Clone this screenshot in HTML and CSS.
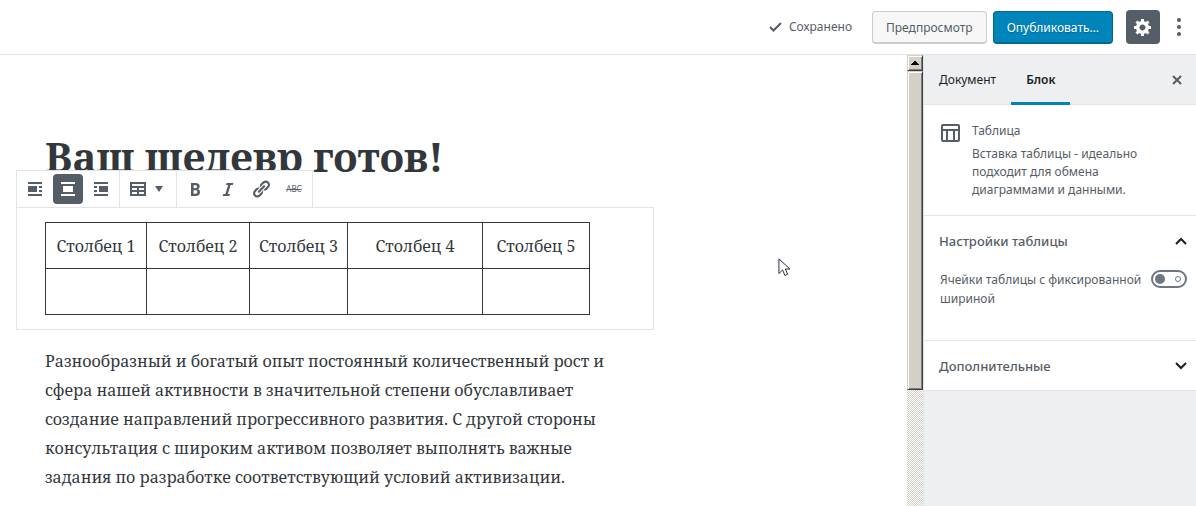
FILE: index.html
```html
<!DOCTYPE html>
<html lang="ru">
<head>
<meta charset="utf-8">
<meta name="viewport" content="width=device-width, initial-scale=1">
<title>Редактор записи</title>
<link rel="stylesheet" href="styles.css">
</head>
<body>
<div class="app">
  <header class="header">
    <span class="saved">
      <svg class="icon" width="20" height="20" viewBox="0 0 20 20" aria-hidden="true"><path d="M15.3 5.3l-6.8 6.8-2.8-2.8-1.4 1.4 4.2 4.2 8.2-8.2"/></svg>
      Сохранено
    </span>
    <button class="button" type="button">Предпросмотр</button>
    <button class="button button-primary" type="button">Опубликовать…</button>
    <button class="settings" type="button" aria-label="Настройки">
      <svg class="icon" width="20" height="20" viewBox="0 0 20 20"><path d="M18 12h-2.180c-.17.7-.44 1.350-.81 1.930l1.540 1.540-2.100 2.100-1.540-1.540c-.58.360-1.230.630-1.910.790V19H8v-2.180c-.68-.16-1.330-.43-1.910-.79l-1.540 1.540-2.120-2.120 1.540-1.540c-.36-.58-.63-1.230-.79-1.910H1V9.030h2.170c.16-.7.44-1.350.8-1.940L2.430 5.550l2.100-2.100 1.540 1.540c.58-.37 1.240-.64 1.930-.81V2h3v2.180c.68.160 1.330.430 1.910.790l1.540-1.540 2.120 2.120-1.540 1.540c.36.590.64 1.240.8 1.940H18V12zm-8.500 1.500c1.660 0 3-1.340 3-3s-1.340-3-3-3-3 1.340-3 3 1.340 3 3 3z"/></svg>
    </button>
    <button class="more" type="button" aria-label="Ещё">
      <svg class="icon" width="6" height="20" viewBox="0 0 6 20"><circle cx="3" cy="3" r="2"/><circle cx="3" cy="10" r="2"/><circle cx="3" cy="17" r="2"/></svg>
    </button>
  </header>

  <div class="workspace">
    <main class="editor">
      <h1 class="title">Ваш шедевр готов!</h1>
      <section class="block">
        <div class="toolbar" role="toolbar" aria-label="Инструменты блока">
          <div class="group">
            <button class="tool" type="button" aria-label="По левому краю"><svg class="icon" width="20" height="20" viewBox="0 0 20 20"><path d="M3 5h14V3H3v2zm9 8V7H3v6h9zm2-4h3V7h-3v2zm0 4h3v-2h-3v2zM3 17h14v-2H3v2z"/></svg></button>
            <button class="tool tool-active" type="button" aria-label="По центру"><svg class="icon" width="20" height="20" viewBox="0 0 20 20"><path d="M3 5h14V3H3v2zm12 8V7H5v6h10zM3 17h14v-2H3v2z"/></svg></button>
            <button class="tool" type="button" aria-label="По правому краю"><svg class="icon" width="20" height="20" viewBox="0 0 20 20"><path d="M3 5h14V3H3v2zm0 4h3V7H3v2zm14 4V7H8v6h9zM3 13h3v-2H3v2zm0 4h14v-2H3v2z"/></svg></button>
          </div>
          <div class="group">
            <button class="tool tool-wide" type="button" aria-label="Изменить таблицу"><svg class="icon" width="20" height="20" viewBox="0 0 20 20"><path d="M18 17V3H2v14h16zM16 7H4V5h12v2zm-7 4H4V9h5v2zm7 0h-5V9h5v2zm-7 4H4v-2h5v2zm7 0h-5v-2h5v2z"/></svg><svg class="icon" width="8" height="6" viewBox="0 0 8 6"><path d="M0 0h8L4 6z"/></svg></button>
          </div>
          <div class="group">
            <button class="tool" type="button" aria-label="Жирный"><svg class="icon" width="20" height="20" viewBox="0 0 20 20"><path d="M6 4v13h4.540c1.370 0 2.460-.33 3.260-1 .8-.66 1.200-1.580 1.200-2.770 0-.84-.17-1.510-.51-2.010s-.9-.85-1.670-1.030v-.09c.57-.1 1.020-.4 1.360-.9s.51-1.130.51-1.910c0-1.140-.39-1.980-1.170-2.500C12.750 4.260 11.500 4 9.780 4H6zm2.570 5.150V6.260h1.360c.73 0 1.270.11 1.610.32.34.22.51.58.51 1.070 0 .54-.16.92-.47 1.150s-.82.35-1.510.35h-1.500zm0 2.190h1.600c1.440 0 2.160.53 2.160 1.610 0 .6-.17 1.050-.51 1.340s-.86.43-1.570.43H8.570v-3.380z"/></svg></button>
            <button class="tool" type="button" aria-label="Курсив"><svg class="icon" width="20" height="20" viewBox="0 0 20 20"><path d="M14.780 6h-2.130l-2.800 9h2.120l-.62 2H4.600l.62-2h2.140l2.800-9H8.030l.62-2h6.750z"/></svg></button>
            <button class="tool" type="button" aria-label="Ссылка"><svg class="icon" width="20" height="20" viewBox="0 0 20 20"><path d="M17.740 2.760c1.680 1.690 1.680 4.410 0 6.100l-1.530 1.520c-1.120 1.120-2.700 1.470-4.140 1.090l2.620-2.610.76-.77.76-.76c.84-.84.84-2.200 0-3.040-.84-.85-2.200-.85-3.040 0l-.77.760-3.380 3.380c-.37-1.440-.02-3.020 1.100-4.140l1.520-1.530c1.690-1.680 4.420-1.680 6.100 0zM8.590 13.430l5.340-5.340c.42-.42.420-1.100 0-1.520-.44-.43-1.130-.39-1.530 0l-5.330 5.340c-.42.420-.42 1.100 0 1.520.44.430 1.130.39 1.520 0zm-.76 2.290l4.140-4.150c.38 1.440.03 3.020-1.090 4.140l-1.520 1.530c-1.690 1.680-4.410 1.680-6.100 0-1.680-1.680-1.680-4.420 0-6.100l1.530-1.520c1.120-1.120 2.700-1.470 4.140-1.100l-4.140 4.150c-.85.840-.85 2.200 0 3.050.84.840 2.200.84 3.040 0z"/></svg></button>
            <button class="tool" type="button" aria-label="Зачёркнутый"><span class="strike">ABC</span></button>
          </div>
        </div>
        <table class="table">
          <colgroup><col class="col-1"><col class="col-2"><col class="col-3"><col class="col-4"><col class="col-5"></colgroup>
          <tr><td>Столбец 1</td><td>Столбец 2</td><td>Столбец 3</td><td>Столбец 4</td><td>Столбец 5</td></tr>
          <tr><td></td><td></td><td></td><td></td><td></td></tr>
        </table>
      </section>
      <p class="paragraph">Разнообразный и богатый опыт постоянный количественный рост и<br>сфера нашей активности в значительной степени обуславливает<br>создание направлений прогрессивного развития. С другой стороны<br>консультация с широким активом позволяет выполнять важные<br>задания по разработке соответствующий условий активизации.</p>
      <svg class="cursor" width="13" height="20" viewBox="0 0 13 20" aria-hidden="true"><path d="M1 1v16l4-4 2.500 6 3-1.300L8 12h5z" transform="scale(.92)"/></svg>
    </main>

    <div class="scrollbar" aria-hidden="true">
      <div class="scroll-up"><svg width="8" height="4" viewBox="0 0 8 4"><path d="M3 0h2v1h1v1h1v1h1v1H0V3h1V2h1V1h1z"/></svg></div>
      <div class="thumb"></div>
    </div>

    <aside class="sidebar">
      <div class="tabs">
        <button class="tab" type="button">Документ</button>
        <button class="tab tab-active" type="button">Блок</button>
        <button class="close" type="button" aria-label="Закрыть"><svg class="icon" width="10" height="10" viewBox="0 0 10 10"><path class="line" d="M1 1l8 8M9 1L1 9"/></svg></button>
      </div>
      <div class="card">
        <svg class="icon" width="24" height="24" viewBox="0 0 24 24" aria-hidden="true"><path fill-rule="evenodd" d="M4 3h15a2 2 0 0 1 2 2v14a2 2 0 0 1-2 2H4a2 2 0 0 1-2-2V5a2 2 0 0 1 2-2zM4 5v3h15V5zM4 10v9h3v-9zM9 10v9h5v-9zM16 10v9h3v-9z"/></svg>
        <div class="card-text">
          <div class="card-title">Таблица</div>
          <div class="card-description">Вставка таблицы - идеально подходит для обмена диаграммами и данными.</div>
        </div>
      </div>
      <section class="panel panel-open">
        <button class="panel-head" type="button">Настройки таблицы<svg width="12" height="8" viewBox="0 0 12 8"><path class="chevron" d="M1 7l5-5 5 5"/></svg></button>
        <div class="setting">
          <label for="fixed">Ячейки таблицы с фиксированной шириной</label>
          <input class="toggle" id="fixed" type="checkbox">
        </div>
      </section>
      <section class="panel">
        <button class="panel-head" type="button">Дополнительные<svg width="12" height="8" viewBox="0 0 12 8"><path class="chevron" d="M1 1l5 5 5-5"/></svg></button>
      </section>
    </aside>
  </div>
</div>
</body>
</html>
```

FILE: styles.css
```css
*, ::before, ::after { box-sizing: border-box; }

body {
  margin: 0;
  background: #fff;
  color: #555d66;
  font: 12px/18px "Noto Sans", "Open Sans", sans-serif;
}

button {
  margin: 0;
  padding: 0;
  border: 0;
  background: none;
  color: inherit;
  font: inherit;
}

svg { display: block; flex: none; }
.icon { fill: #555d66; }

.app {
  display: flex;
  flex-direction: column;
  height: 100vh;
  overflow: hidden;
}

/* Top bar */
.header {
  display: flex;
  flex: none;
  align-items: center;
  justify-content: flex-end;
  height: 55px;
  padding-right: 14px;
  border-bottom: 1px solid #e2e4e7;
}

.saved {
  display: flex;
  align-items: center;
  gap: 4px;
  margin-right: 20px;
}

.button {
  height: 33px;
  margin-right: 6px;
  padding: 3px 13px 0;
  border: 1px solid #ccc;
  border-bottom-width: 2px;
  border-radius: 4px;
  background: #f7f7f7;
}

.button-primary {
  margin-right: 13px;
  border-color: #006799;
  background: #0085ba;
  color: #fff;
  text-shadow: 0 1px 1px #006799;
}

.settings {
  display: grid;
  place-items: center;
  width: 34px;
  height: 34px;
  margin-right: 16px;
  border-radius: 4px;
  background: #555d66;
}
.settings .icon { fill: #fff; }

/* Editor */
.workspace {
  display: flex;
  flex: 1;
  min-height: 0;
}

.editor {
  flex: 1;
  min-width: 0;
  overflow: hidden;
  padding: 75px 0 0 16px;
  color: #32373c;
  font-family: "Noto Serif", "DejaVu Serif", serif;
}

.title {
  margin: 0 0 23px 29px;
  font-size: 40px;
  line-height: 54px;
  white-space: nowrap;
}

.block {
  position: relative;
  max-width: 638px;
  padding: 14px 28px;
  border: 1px solid #e2e4e7;
}

.toolbar {
  position: absolute;
  left: -1px;
  bottom: 100%;
  display: flex;
  border: 1px solid #e2e4e7;
  background: #fff;
}

.group {
  display: flex;
  align-items: center;
  gap: 3px;
  padding: 3px;
}
.group + .group { border-left: 1px solid #e2e4e7; }

.tool {
  display: flex;
  align-items: center;
  justify-content: center;
  width: 30px;
  height: 30px;
  border-radius: 4px;
}
.tool-wide {
  gap: 7px;
  justify-content: flex-start;
  width: 50px;
  padding-left: 5px;
}
.tool-active { background: #555d66; }
.tool-active .icon { fill: #fff; }

.strike {
  color: #555d66;
  font: 8px/10px "Noto Sans", sans-serif;
  text-decoration: line-through;
}

.table {
  border-collapse: collapse;
  table-layout: fixed;
  width: 545px;
  font-size: 16px;
  line-height: 28px;
}
.table td {
  height: 46px;
  padding: 0;
  border: 1px solid #32373c;
  text-align: center;
  white-space: nowrap;
}
.col-1 { width: 101px; }
.col-2 { width: 103px; }
.col-3 { width: 98px; }
.col-4 { width: 135px; }
.col-5 { width: 107px; }

.paragraph {
  margin: 17px 0 0 29px;
  font-size: 16px;
  line-height: 29px;
  white-space: nowrap;
}

.cursor {
  position: absolute;
  left: 778px;
  top: 258px;
  fill: #fff;
  stroke: #1c1c30;
}

/* Scroll bar */
.scrollbar {
  display: flex;
  flex-direction: column;
  flex: none;
  width: 16px;
  background: repeating-conic-gradient(#d4d0c8 0 25%, #fff 0 50%) 0 0 / 2px 2px;
}

.scroll-up,
.thumb {
  border: 1px solid #d4d0c8;
  border-right-color: #404040;
  border-bottom-color: #404040;
  background: #d4d0c8;
  box-shadow: inset 1px 1px #fff, inset -1px -1px #808080;
}

.scroll-up {
  display: grid;
  place-items: center;
  height: 16px;
}
.thumb { height: 319px; }

/* Sidebar */
.sidebar {
  flex: none;
  width: 273px;
  border-left: 1px solid #e2e4e7;
  background: #edeff0;
}

.tabs {
  display: flex;
  height: 50px;
  border-bottom: 1px solid #e2e4e7;
}

.tab {
  height: 50px;
  padding: 3px 15px 0;
  border-bottom: 3px solid transparent;
  color: #191e23;
}
.tab-active {
  border-bottom-color: #0085ba;
  font-weight: 600;
}

.close {
  margin-left: auto;
  padding: 0 14px;
}

.line {
  fill: none;
  stroke: #555d66;
  stroke-width: 2;
}

.card {
  display: flex;
  gap: 9px;
  padding: 17px 16px 16px 15px;
  background: #fff;
}
.card .icon { margin-top: -1px; }
.card-title { margin-bottom: 5px; }
.card-description { max-width: 190px; }

.panel {
  border-top: 1px solid #e2e4e7;
  background: #fff;
}
.panel:last-child { border-bottom: 1px solid #e2e4e7; }
.panel-open { padding-bottom: 32px; }

.panel-head {
  display: flex;
  align-items: center;
  justify-content: space-between;
  width: 100%;
  height: 49px;
  padding: 0 9px 0 15px;
  font-size: 13px;
  font-weight: 500;
}

.chevron {
  fill: none;
  stroke: #191e23;
  stroke-width: 2;
}

.setting {
  display: flex;
  align-items: flex-start;
  justify-content: space-between;
  padding: 5px 9px 0 16px;
  line-height: 19px;
}

.toggle {
  position: relative;
  flex: none;
  appearance: none;
  width: 36px;
  height: 18px;
  margin: 0;
  border: 2px solid #6c7781;
  border-radius: 9px;
}
.toggle::before {
  position: absolute;
  top: 2px;
  left: 2px;
  width: 10px;
  height: 10px;
  border-radius: 50%;
  background: #6c7781;
  content: "";
}
.toggle::after {
  position: absolute;
  top: 4px;
  right: 4px;
  width: 6px;
  height: 6px;
  border: 1px solid #6c7781;
  border-radius: 50%;
  content: "";
}
```
